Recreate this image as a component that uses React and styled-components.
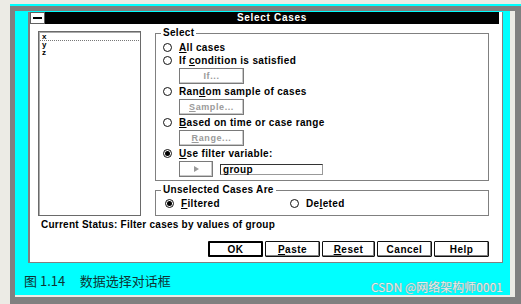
import React from 'react'
import styled, { createGlobalStyle } from 'styled-components'

const GlobalStyle = createGlobalStyle`
  html, body {
    margin: 0;
    padding: 0;
    background: #ecebe5;
  }
  body {
    font-family: "Liberation Sans", Arial, sans-serif;
    font-size: 10px;
    font-weight: 700;
    color: #000;
  }
`;

const Shadow = styled.div`
  width: 511px;
  height: 300px;
  margin: 4px 0 0 10px;
  box-sizing: border-box;
  background: #808080;
  border-top: 2px solid #00ffff;
  padding: 5px 6px 7px 5px;
`;

const Figure = styled.div`
  height: 100%;
  box-sizing: border-box;
  background: #00ffff;
  border-right: 5px solid #ecebe5;
  border-bottom: 2px solid #ecebe5;
  padding: 1px 7px 0 13px;
  display: flex;
  flex-direction: column;
`;

const Window = styled.div`
  height: 251px;
  box-sizing: border-box;
  background: #fff;
  border-left: 2px solid #808080;
  border-right: 1px solid #808080;
  border-bottom: 1px solid #808080;
  padding-right: 3px;
  display: flex;
  flex-direction: column;
`;

const TitleBar = styled.div`
  height: 12px;
  display: flex;
`;

const SysMenu = styled.div`
  width: 15px;
  box-sizing: border-box;
  border: 1px solid #606060;
  background: #fff;
  display: flex;
  align-items: center;
  justify-content: center;

  &::after {
    content: '';
    width: 9px;
    height: 2px;
    background: #000;
  }
`;

const TitleText = styled.div`
  flex: 1;
  background: #000;
  color: #fff;
  text-align: center;
  line-height: 12px;
  letter-spacing: 0.7px;
`;

const Body = styled.div`
  flex: 1;
  padding: 4px 10px 5px 8px;
  display: flex;
  flex-direction: column;
`;

const Top = styled.div`
  display: flex;
  align-items: flex-start;
  gap: 14px;
`;

const VarList = styled.div`
  width: 103px;
  height: 185px;
  margin-top: 3px;
  box-sizing: border-box;
  border: 1px solid #6a6a6a;
  box-shadow: inset 1px 1px 0 #aaa;
  padding: 1px 1px;
  font-size: 8px;
`;

const VarItem = styled.div`
  box-sizing: border-box;
  padding-left: 2px;
  height: 8px;
  line-height: 7px;
  border-bottom: 1px dotted ${p => (p.focused ? '#777' : 'transparent')};
`;

const RightCol = styled.div`
  flex: 1;
  display: flex;
  flex-direction: column;
  gap: 4px;
`;

const Group = styled.fieldset`
  margin: 0;
  border: 1px solid #808080;
  padding: ${p => p.pad || '3px 0 2px 0'};
  min-width: 0;
`;

const Legend = styled.legend`
  margin-left: 5px;
  padding: 0 2px;
  line-height: 10px;
  letter-spacing: 0.3px;
`;

const RadioRow = styled.div`
  height: 13px;
  display: flex;
  align-items: center;
  padding-left: ${p => p.indent ?? 7}px;
  width: ${p => (p.w ? `${p.w}px` : 'auto')};
  box-sizing: border-box;
  gap: 7px;
  letter-spacing: 0.35px;
`;

const Radio = styled.span`
  width: 9px;
  height: 9px;
  box-sizing: border-box;
  border-radius: 50%;
  border: 1px solid #111;
  background: #fff;
  display: flex;
  align-items: center;
  justify-content: center;
  flex: none;

  &::after {
    content: '';
    width: 5px;
    height: 5px;
    border-radius: 50%;
    background: ${p => (p.checked ? '#000' : 'transparent')};
  }
`;

const SubRow = styled.div`
  display: flex;
  align-items: center;
  gap: 7px;
  margin: 1px 0 1px 23px;
`;

const GhostButton = styled.div`
  width: ${p => p.w || 65}px;
  height: 16px;
  box-sizing: border-box;
  border: 1px solid #7a7a7a;
  box-shadow: inset -1px -1px 0 #c8c8c8;
  color: #9a9a9a;
  display: flex;
  align-items: center;
  justify-content: center;
  letter-spacing: 0.6px;
  font-size: 9px;
`;

const Arrow = styled.span`
  width: 0;
  height: 0;
  border-top: 3px solid transparent;
  border-bottom: 3px solid transparent;
  border-left: 5px solid #999;
`;

const Field = styled.div`
  width: 103px;
  height: 11px;
  box-sizing: border-box;
  border: 1px solid #333;
  border-right-color: #999;
  border-bottom-color: #999;
  padding-left: 2px;
  line-height: 9px;
  letter-spacing: 0.3px;
`;

const UnselRow = styled.div`
  display: flex;
  align-items: center;
`;

const Status = styled.div`
  margin: 3px 0 0 3px;
  line-height: 12px;
  letter-spacing: 0.25px;
`;

const ButtonRow = styled.div`
  margin-top: 10px;
  display: flex;
  justify-content: flex-end;
  gap: 2px;
`;

const PushButton = styled.div`
  width: ${p => p.w || 55}px;
  height: 16px;
  box-sizing: border-box;
  border: ${p => (p.primary ? '2px solid #000' : '1px solid #111')};
  border-radius: 1px;
  box-shadow: ${p => (p.primary ? 'none' : 'inset -1px -1px 0 #808080, inset 1px 1px 0 #fff')};
  display: flex;
  align-items: center;
  justify-content: center;
  letter-spacing: 0.5px;
`;

const CaptionRow = styled.div`
  flex: 1;
  display: flex;
  align-items: flex-end;
  justify-content: space-between;
  margin-left: -4px;
`;

const Caption = styled.div`
  font-family: "Noto Sans CJK SC", "Liberation Sans", sans-serif;
  font-weight: 400;
  font-size: 13px;
  line-height: 18px;
  padding-bottom: 5px;
  color: #0e3434;
  white-space: pre;
`;

const Watermark = styled.div`
  font-family: "Noto Sans CJK SC", "Liberation Sans", sans-serif;
  font-weight: 400;
  font-size: 12px;
  line-height: 14px;
  padding-bottom: 1px;
  color: #e6eeee;
  text-shadow: 0 0 1px #8a9a9a, 0 0 1px #8a9a9a;
`;

const vars = ['x', 'y', 'z'];

export default function App() {
  return (
    <>
      <GlobalStyle />
      <Shadow>
        <Figure>
          <Window>
            <TitleBar>
              <SysMenu />
              <TitleText>Select Cases</TitleText>
            </TitleBar>
            <Body>
              <Top>
                <VarList>
                  {vars.map((v, i) => (
                    <VarItem key={v} focused={i === 0}>{v}</VarItem>
                  ))}
                </VarList>
                <RightCol>
                  <Group>
                    <Legend>Select</Legend>
                    <RadioRow><Radio /><span><u>A</u>ll cases</span></RadioRow>
                    <RadioRow><Radio /><span>If <u>c</u>ondition is satisfied</span></RadioRow>
                    <SubRow><GhostButton>If...</GhostButton></SubRow>
                    <RadioRow><Radio /><span>Ran<u>d</u>om sample of cases</span></RadioRow>
                    <SubRow><GhostButton><u>S</u>ample...</GhostButton></SubRow>
                    <RadioRow><Radio /><span><u>B</u>ased on time or case range</span></RadioRow>
                    <SubRow><GhostButton><u>R</u>ange...</GhostButton></SubRow>
                    <RadioRow><Radio checked /><span><u>U</u>se filter variable:</span></RadioRow>
                    <SubRow>
                      <GhostButton w={34}><Arrow /></GhostButton>
                      <Field>group</Field>
                    </SubRow>
                  </Group>
                  <Group pad="2px 0 5px 0">
                    <Legend>Unselected Cases Are</Legend>
                    <UnselRow>
                      <RadioRow indent={9} w={134}><Radio checked /><span><u>F</u>iltered</span></RadioRow>
                      <RadioRow indent={0}><Radio /><span>De<u>l</u>eted</span></RadioRow>
                    </UnselRow>
                  </Group>
                </RightCol>
              </Top>
              <Status>Current Status: Filter cases by values of group</Status>
              <ButtonRow>
                <PushButton primary>OK</PushButton>
                <PushButton><span><u>P</u>aste</span></PushButton>
                <PushButton w={53}><span><u>R</u>eset</span></PushButton>
                <PushButton>Cancel</PushButton>
                <PushButton>Help</PushButton>
              </ButtonRow>
            </Body>
          </Window>
          <CaptionRow>
            <Caption>{'图 1.14     数据选择对话框'}</Caption>
            <Watermark>CSDN @网络架构师0001</Watermark>
          </CaptionRow>
        </Figure>
      </Shadow>
    </>
  )
}
